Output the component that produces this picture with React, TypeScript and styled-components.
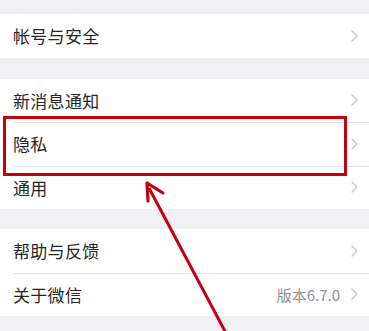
import styled, { createGlobalStyle } from "styled-components";

const Global = createGlobalStyle`
	html, body {
		margin: 0;
		padding: 0;
		background: #efeff4;
		font-family: "Noto Sans CJK SC", "Noto Sans", sans-serif;
	}
`;

const Page = styled.div`
	position: relative;
	width: 369px;
	height: 331px;
	overflow: hidden;
	padding-top: 14px;
	box-sizing: border-box;
	background: #efeff4;
`;

const Group = styled.div`
	background: #fff;
	margin-bottom: ${(p: { gap?: number }) => p.gap ?? 21}px;
`;

const Row = styled.div`
	position: relative;
	height: 43.5px;
	display: flex;
	align-items: center;
	padding: 0 11px 0 13px;
	box-sizing: border-box;

	& + &::before {
		content: "";
		position: absolute;
		top: 0;
		left: 13px;
		right: 0;
		height: 1px;
		background: #e5e5e8;
	}
`;

const Label = styled.span`
	flex: 1;
	font-size: 17px;
	color: #262626;
	letter-spacing: 0.3px;
`;

const Value = styled.span`
	font-size: 15px;
	color: #8e8e93;
	margin-right: 11px;
`;

const Chevron = () => (
	<svg width={7} height={12} viewBox="0 0 7 12" fill="none">
		<path d="M1 1 L6 6 L1 11" stroke="#c7c7cc" strokeWidth={1.4} strokeLinecap="round" strokeLinejoin="round" />
	</svg>
);

const Highlight = styled.div`
	position: absolute;
	left: 3px;
	top: 116px;
	width: 344px;
	height: 60px;
	border: 3px solid #c4000e;
	box-sizing: border-box;
	pointer-events: none;
`;

const Overlay = styled.svg`
	position: absolute;
	left: 0;
	top: 0;
	pointer-events: none;
`;

type Item = { label: string; value?: string };

const groups: { items: Item[]; gap: number }[] = [
	{ items: [{ label: "帐号与安全" }], gap: 21 },
	{ items: [{ label: "新消息通知" }, { label: "隐私" }, { label: "通用" }], gap: 20 },
	{ items: [{ label: "帮助与反馈" }, { label: "关于微信", value: "版本6.7.0" }], gap: 0 },
];

export default function App() {
	return (
		<Page>
			<Global />
			{groups.map((g, i) => (
				<Group key={i} gap={g.gap}>
					{g.items.map((it) => (
						<Row key={it.label}>
							<Label>{it.label}</Label>
							{it.value && <Value>{it.value}</Value>}
							<Chevron />
						</Row>
					))}
				</Group>
			))}
			<Highlight />
			<Overlay width={369} height={331} viewBox="0 0 369 331">
				<line x1={149} y1={188} x2={227} y2={335} stroke="#c4000e" strokeWidth={3} />
				<path d="M147 183 L148 201 M147 183 L163 193" stroke="#c4000e" strokeWidth={3.2} strokeLinecap="round" />
			</Overlay>
		</Page>
	);
}
